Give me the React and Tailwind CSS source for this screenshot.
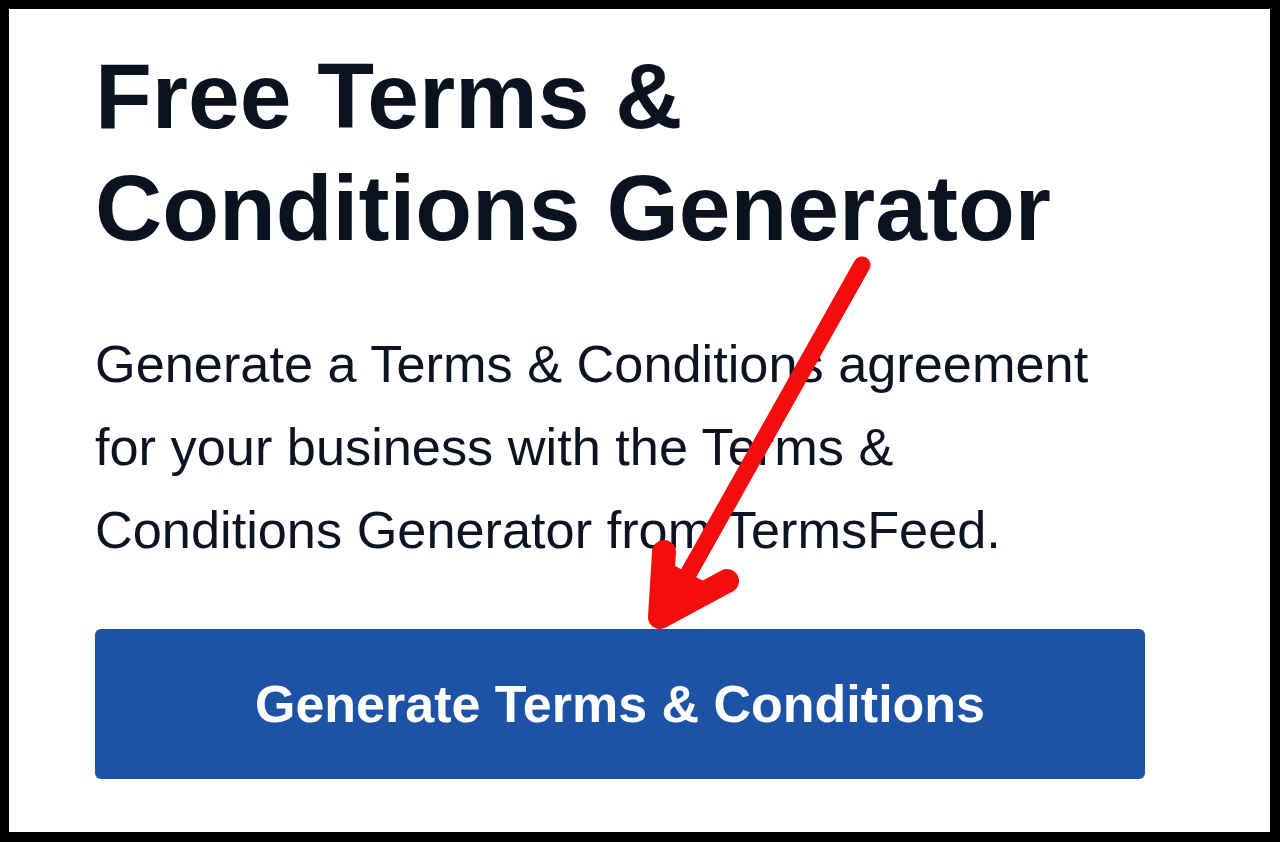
import React from "react";

// Red pointer drawn over the page, aimed at the call-to-action button.
// Coordinates are inside the black frame (9px border).
const Arrow = () => (
  <svg
    className="absolute left-0 top-0 pointer-events-none"
    width="1262"
    height="824"
    viewBox="0 0 1262 824"
  >
    <g
      stroke="#f40d0d"
      strokeLinecap="round"
      strokeLinejoin="round"
      fill="#f40d0d"
    >
      <path d="M853 256 L664 592" strokeWidth="17" fill="none" />
      <path d="M655 543 L651 608 L718 572" strokeWidth="24" fill="none" />
      <polygon points="651,608 659,560 697,580" strokeWidth="12" />
    </g>
  </svg>
);

const App = () => {
  return (
    <div className="relative w-[1280px] h-[842px] bg-white border-l-[9px] border-t-[9px] border-r-[10px] border-b-[10px] border-black overflow-hidden font-['Liberation_Sans',Arial,sans-serif]">
      <div className="w-[1050px] ml-[86px] pt-[31px] flex flex-col">
        <h1 className="text-[93px] leading-[112px] font-bold text-[#0a111f]">
          Free Terms &amp; Conditions Generator
        </h1>
        <p className="mt-[59px] text-[52.3px] leading-[83px] text-[#0c1322]">
          Generate a Terms &amp; Conditions agreement for your business with the
          Terms &amp; Conditions Generator from TermsFeed.
        </p>
        <button className="mt-[57px] h-[150px] w-full rounded-[6px] bg-[#1c53a6] text-white text-[52px] font-bold flex items-center justify-center">
          Generate Terms &amp; Conditions
        </button>
      </div>
      <Arrow />
    </div>
  );
};

export default App;
